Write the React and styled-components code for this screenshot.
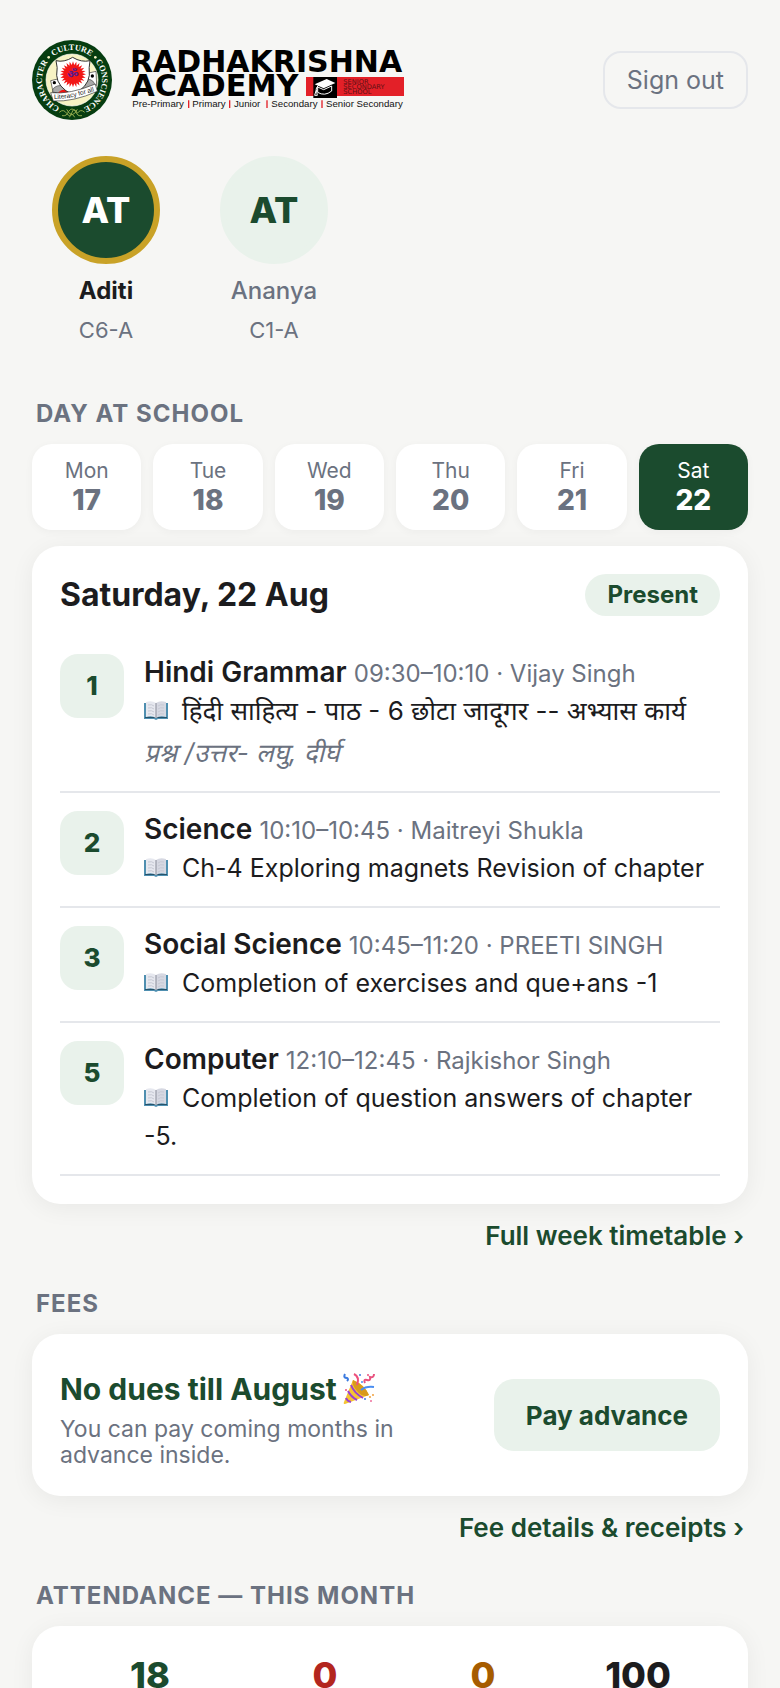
import React, { useState } from "react";
import styled, { createGlobalStyle } from "styled-components";

const colors = {
    bg: "#f6f6f4",
    card: "#ffffff",
    ink: "#1c1c1e",
    muted: "#6b7280",
    line: "#e5e7eb",
    green: "#1b4b2e",
    mint: "#e9f2eb",
    gold: "#c9a227",
    red: "#b3261e",
    amber: "#a65c00",
}

const GlobalStyle = createGlobalStyle`
*, *::before, *::after {
box-sizing: border-box;
}
html {
scrollbar-width: none;
}
body {
margin: 0;
background: ${colors.bg};
color: ${colors.ink};
font-family: Inter, "Noto Sans Devanagari", "Noto Sans", sans-serif;
}
button {
font-family: inherit;
cursor: pointer;
}
h1, h2, h3, p {
margin: 0;
}
`
const Page = styled.main`
padding: 40px 32px;
`
const Header = styled.header`
display: flex;
justify-content: space-between;
align-items: center;
margin-bottom: 36px;
`
const Logo = styled.svg`
display: block;
width: 372px;
height: 80px;
`
const SignOut = styled.button`
height: 58px;
padding: 0 22px;
border: 2px solid ${colors.line};
border-radius: 18px;
background: transparent;
color: ${colors.muted};
font-size: 25px;
line-height: 32px;
`
const Kids = styled.div`
display: flex;
gap: 20px;
margin-bottom: 58px;
`
const Kid = styled.button`
display: flex;
flex-direction: column;
align-items: center;
gap: 10px;
width: 148px;
padding: 0;
border: 0;
background: none;
`
const Avatar = styled.span`
display: flex;
justify-content: center;
align-items: center;
width: 108px;
height: 108px;
border: 6px solid ${({ $active }) => ($active ? colors.gold : colors.mint)};
border-radius: 50%;
background: ${({ $active }) => ($active ? colors.green : colors.mint)};
color: ${({ $active }) => ($active ? "#ffffff" : colors.green)};
font-size: 36px;
font-weight: 800;
`
const KidName = styled.span`
color: ${({ $active }) => ($active ? colors.ink : colors.muted)};
font-size: 24px;
font-weight: ${({ $active }) => ($active ? 700 : 500)};
line-height: 34px;
`
const KidClass = styled.span`
color: ${colors.muted};
font-size: 22px;
line-height: 24px;
`
const SectionTitle = styled.h2`
margin: 38px 4px 16px;
color: ${colors.muted};
font-size: 24px;
font-weight: 700;
line-height: 28px;
letter-spacing: 1px;
text-transform: uppercase;
`
const Days = styled.div`
display: grid;
grid-template-columns: repeat(6, 1fr);
gap: 12px;
margin-bottom: 16px;
`
const Day = styled.button`
display: flex;
flex-direction: column;
align-items: center;
padding: 14px 0;
border: 0;
border-radius: 20px;
background: ${({ $active }) => ($active ? colors.green : colors.card)};
color: ${({ $active }) => ($active ? "#ffffff" : colors.muted)};
box-shadow: 0 2px 8px rgba(0, 0, 0, 0.04);
`
const DayName = styled.span`
font-size: 21px;
line-height: 26px;
`
const DayNumber = styled.span`
font-size: 28px;
font-weight: 800;
line-height: 32px;
`
const Card = styled.section`
padding: 28px;
border-radius: 28px;
background: ${colors.card};
box-shadow: 0 4px 24px rgba(0, 0, 0, 0.06);
`
const CardHead = styled.div`
display: flex;
justify-content: space-between;
align-items: center;
margin-bottom: 20px;
`
const CardTitle = styled.h3`
font-size: 32px;
font-weight: 700;
line-height: 42px;
`
const Badge = styled.span`
padding: 0 22px;
border-radius: 21px;
background: ${colors.mint};
color: ${colors.green};
font-size: 24px;
font-weight: 700;
line-height: 42px;
`
const Period = styled.div`
display: flex;
align-items: flex-start;
gap: 20px;
padding: 18px 0 19px;
border-bottom: 2px solid ${colors.line};
`
const PeriodNumber = styled.div`
flex: none;
width: 64px;
border-radius: 18px;
background: ${colors.mint};
color: ${colors.green};
font-size: 26px;
font-weight: 800;
line-height: 64px;
text-align: center;
`
const PeriodBody = styled.div`
flex: 1;
min-width: 0;
`
const Subject = styled.h3`
font-size: 28px;
font-weight: 600;
line-height: 36px;
`
const Meta = styled.span`
color: ${colors.muted};
font-size: 24px;
font-weight: 400;
line-height: 24px;
`
const Note = styled.p`
margin-top: 2px;
font-size: 25px;
line-height: 38px;
&:lang(hi) {
font-size: 26px;
}
`
const Homework = styled.p`
margin-top: 4px;
color: ${colors.muted};
font-size: 26px;
font-style: italic;
line-height: 38px;
`
const Book = styled.svg`
width: 24px;
height: 20px;
margin-right: 14px;
`
const MoreLink = styled.a`
display: block;
margin: 16px 4px 0;
color: ${colors.green};
font-size: 26px;
font-weight: 600;
line-height: 32px;
text-align: right;
text-decoration: none;
`
const Fees = styled(Card)`
display: flex;
justify-content: space-between;
align-items: center;
gap: 32px;
`
const FeesText = styled.div`
max-width: 360px;
`
const FeesTitle = styled.h3`
color: ${colors.green};
font-size: 30px;
font-weight: 700;
line-height: 54px;
white-space: nowrap;
`
const FeesInfo = styled.p`
color: ${colors.muted};
font-size: 23px;
line-height: 26px;
`
const Party = styled.svg`
width: 32px;
height: 32px;
margin-left: 6px;
vertical-align: -5px;
`
const PayButton = styled.button`
flex: none;
height: 72px;
padding: 0 32px;
border: 0;
border-radius: 20px;
background: ${colors.mint};
color: ${colors.green};
font-size: 26px;
font-weight: 700;
`
const Stats = styled(Card)`
display: grid;
grid-template-columns: 180fr 170fr 146fr 164fr;
`
const Stat = styled.div`
color: ${({ $color }) => $color};
font-size: 36px;
font-weight: 800;
line-height: 42px;
text-align: center;
`

const kids = [
    { initials: "AT", name: "Aditi", grade: "C6-A" },
    { initials: "AT", name: "Ananya", grade: "C1-A" },
]
const days = [
    ["Mon", 17],
    ["Tue", 18],
    ["Wed", 19],
    ["Thu", 20],
    ["Fri", 21],
    ["Sat", 22],
]
const periods = [
    {
        no: 1,
        lang: "hi",
        subject: "Hindi Grammar",
        meta: "09:30–10:10 · Vijay Singh",
        note: "हिंदी साहित्य - पाठ - 6 छोटा जादूगर -- अभ्यास कार्य",
        homework: "प्रश्न /उत्तर- लघु, दीर्घ",
    },
    { no: 2, subject: "Science", meta: "10:10–10:45 · Maitreyi Shukla", note: "Ch-4 Exploring magnets Revision of chapter" },
    { no: 3, subject: "Social Science", meta: "10:45–11:20 · PREETI SINGH", note: "Completion of exercises and que+ans -1" },
    { no: 5, subject: "Computer", meta: "12:10–12:45 · Rajkishor Singh", note: "Completion of question answers of chapter -5." },
]
const stats = [
    [18, colors.green],
    [0, colors.red],
    [0, colors.amber],
    [100, colors.ink],
]

// spikes around the om sign
const sunPoints = () => {
    let points = []
    for (let i = 0; i < 48; i++) {
        const r = i % 2 === 0 ? 39 : 28
        const a = (i * Math.PI) / 24
        points.push(`${(159 + r * Math.sin(a)).toFixed(1)},${(133 - r * Math.cos(a)).toFixed(1)}`)
    }
    return points.join(" ")
}

function SchoolLogo() {
    return (
        <Logo viewBox="36 30 1116 240" role="img" aria-label="Radhakrishna Academy">
            <defs>
                <path id="ring" d="M156 240 A90 90 0 0 1 156 60 A90 90 0 0 1 156 240" />
                <path id="ribbon" d="M102 207 Q156 208 240 178" />
            </defs>
            <circle cx="156" cy="150" r="120" fill="#063d10" />
            <circle cx="156" cy="150" r="78" fill="#f7f3c4" stroke="#fff" strokeWidth="2" />
            <g fill="#fff" fontFamily="Liberation Serif, serif" fontWeight="700" fontSize="25" textAnchor="middle">
                <text><textPath href="#ring" startOffset="21%">CHARACTER</textPath></text>
                <text><textPath href="#ring" startOffset="50%">CULTURE</textPath></text>
                <text><textPath href="#ring" startOffset="79%">CONSCIENCE</textPath></text>
            </g>
            <g fill="#f7f3c4">
                <circle cx="86" cy="82" r="4" />
                <circle cx="226" cy="82" r="4" />
            </g>
            <g fill="none" stroke="#8fa84c" strokeWidth="3">
                <path d="M118 247 Q130 235 140 250 T156 247 T172 250 Q182 235 194 247" />
                <path d="M126 257 Q140 260 146 244 Q156 230 166 244 Q172 260 186 257" />
                <path d="M140 238 Q156 270 172 238 M148 262 Q156 245 164 262" />
            </g>
            <path d="M92 152 L118 146 L128 180 L100 190 Z" fill="#fff" stroke="#333" strokeWidth="2" />
            <path d="M202 130 L228 124 L230 166 L206 174 Z" fill="#fff" stroke="#333" strokeWidth="2" />
            <circle cx="103" cy="158" r="5" />
            <circle cx="217" cy="138" r="5" />
            <path d="M98 186 Q96 168 124 166 L150 196 Z" fill="#aaa" stroke="#444" strokeWidth="2" />
            <path d="M178 190 L200 148 Q222 146 226 170 Z" fill="#aaa" stroke="#444" strokeWidth="2" />
            <path d="M112 192 Q126 172 146 184 L148 196 Z" fill="#e11" />
            <path d="M108 92 Q132 98 158 82 Q184 98 210 92 Q206 112 208 136 Q204 172 158 194 Q112 172 110 136 Q114 112 108 92 Z" fill="#fff" stroke="#333" strokeWidth="3" />
            <polygon points={sunPoints()} fill="#f21616" />
            <text x="159" y="145" fontFamily="Noto Sans Devanagari, Noto Sans, sans-serif" fontSize="34" fontWeight="700" fill="#5a1a8c" textAnchor="middle">ॐ</text>
            <path d="M92 188 Q150 194 226 162 L232 184 Q160 216 100 213 Z" fill="#fff" stroke="#333" strokeWidth="2" />
            <text fontFamily="Liberation Sans, sans-serif" fontSize="20" fill="#222">
                <textPath href="#ribbon">Literacy for all</textPath>
            </text>
            <g fontFamily="DejaVu Sans, sans-serif" fontWeight="700" fill="#000">
                <text x="330" y="126" fontSize="90">RADHAKRISHNA</text>
                <text x="334" y="198" fontSize="91">ACADEMY</text>
            </g>
            <rect x="858" y="141" width="294" height="57" fill="#e32028" />
            <rect x="880" y="141" width="71" height="63" fill="#000" />
            <path d="M884 163 L920 147 L946 159 L911 175 Z" fill="#fff" />
            <path d="M893 171 L893 187 Q914 200 935 183 L935 168 L911 179 Z" fill="none" stroke="#fff" strokeWidth="3" />
            <path d="M911 161 Q888 164 888 182 L884 196 L892 196 L889 180" fill="none" stroke="#fff" strokeWidth="3" />
            <g fontFamily="DejaVu Sans, sans-serif" fontSize="20" fill="#5c1014">
                <text x="970" y="161">SENIOR</text>
                <text x="970" y="176">SECONDARY</text>
                <text x="970" y="191">SCHOOL</text>
            </g>
            <g fontFamily="Liberation Sans, sans-serif" fontSize="29" fill="#111">
                <text x="337" y="232">Pre-Primary</text>
                <text x="517" y="232">Primary</text>
                <text x="642" y="232">Junior</text>
                <text x="754" y="232">Secondary</text>
                <text x="918" y="232">Senior Secondary</text>
            </g>
            <path d="M506 211 V234 M629 211 V234 M741 211 V234 M906 211 V234" stroke="#e32028" strokeWidth="4" />
        </Logo>
    );
}

function BookIcon() {
    return (
        <Book viewBox="0 0 24 20" aria-hidden="true">
            <path d="M0 3 H24 V19 H14 L12 20 L10 19 H0 Z" fill="#4f8fb0" />
            <path d="M1 17 H11 L12 18 L13 17 H23 V18 H1 Z" fill="#27536b" />
            <path d="M2 2 Q8 0 12 3 V18 Q8 15 2 17 Z" fill="#e6e8ef" />
            <path d="M22 2 Q16 0 12 3 V18 Q16 15 22 17 Z" fill="#d6d8e2" />
            <path d="M4 5 Q8 4 10 6 M4 8 Q8 7 10 9 M4 11 Q8 10 10 12 M4 14 Q8 13 10 15 M20 5 Q16 4 14 6 M20 8 Q16 7 14 9 M20 11 Q16 10 14 12 M20 14 Q16 13 14 15" fill="none" stroke="#c6c9d4" strokeWidth="1" />
            <path d="M12 3 V18" stroke="#8a8d99" strokeWidth="1" />
        </Book>
    );
}

function PartyIcon() {
    return (
        <Party viewBox="0 0 32 32" aria-hidden="true">
            <path d="M10 7 Q22 12 26 22 L2 31 Q0 31 1 29 Z" fill="#f5c433" />
            <path d="M10 7 Q22 12 26 22 Q20 25 14 18 Q8 11 10 7 Z" fill="#d99a1c" />
            <path d="M8 12 Q11 20 20 25 M5 18 Q8 24 14 27 M3 25 Q4 28 8 29" fill="none" stroke="#9b3fd1" strokeWidth="2" />
            <path d="M11 1 Q17 4 14 12" fill="none" stroke="#ee4f7c" strokeWidth="2" />
            <path d="M18 17 Q23 13 31 14" fill="none" stroke="#4a8df0" strokeWidth="2" />
            <path d="M2 1 Q0 5 4 5 Q6 6 4 8" fill="none" stroke="#3c7be0" strokeWidth="2" />
            <path d="M22 10 Q20 6 24 7 Q28 8 27 4 Q31 5 31 1" fill="none" stroke="#e8527f" strokeWidth="2" />
            <circle cx="17" cy="2" r="1" fill="#3c7be0" />
            <circle cx="25" cy="2" r="1" fill="#ee4f7c" />
            <circle cx="3" cy="17" r="1" fill="#ee4f7c" />
            <circle cx="19" cy="9" r="1" fill="#4a8df0" />
            <circle cx="30" cy="22" r="1" fill="#f0a03c" />
            <circle cx="22" cy="26" r="1" fill="#3c7be0" />
            <circle cx="28" cy="28" r="1" fill="#ee6f9c" />
            <circle cx="27" cy="24" r="1" fill="#f0a03c" />
        </Party>
    );
}

function App() {
    const [kid, setKid] = useState(0)
    const [day, setDay] = useState(22)
    return (
        <>
            <GlobalStyle />
            <Page>
                <Header>
                    <SchoolLogo />
                    <SignOut>Sign out</SignOut>
                </Header>
                <Kids>
                    {
                        kids.map((e, i) => (
                            <Kid key={i} onClick={() => setKid(i)}>
                                <Avatar $active={kid === i}>{e.initials}</Avatar>
                                <KidName $active={kid === i}>{e.name}</KidName>
                                <KidClass>{e.grade}</KidClass>
                            </Kid>
                        ))
                    }
                </Kids>

                <SectionTitle>Day at school</SectionTitle>
                <Days>
                    {
                        days.map(([name, num]) => (
                            <Day key={num} $active={day === num} onClick={() => setDay(num)}>
                                <DayName>{name}</DayName>
                                <DayNumber>{num}</DayNumber>
                            </Day>
                        ))
                    }
                </Days>
                <Card>
                    <CardHead>
                        <CardTitle>Saturday, 22 Aug</CardTitle>
                        <Badge>Present</Badge>
                    </CardHead>
                    {
                        periods.map((e) => (
                            <Period key={e.no}>
                                <PeriodNumber>{e.no}</PeriodNumber>
                                <PeriodBody>
                                    <Subject>{e.subject} <Meta>{e.meta}</Meta></Subject>
                                    <Note lang={e.lang}><BookIcon />{e.note}</Note>
                                    {e.homework ? <Homework lang={e.lang}>{e.homework}</Homework> : null}
                                </PeriodBody>
                            </Period>
                        ))
                    }
                </Card>
                <MoreLink href="#timetable">Full week timetable ›</MoreLink>

                <SectionTitle>Fees</SectionTitle>
                <Fees>
                    <FeesText>
                        <FeesTitle>No dues till August<PartyIcon /></FeesTitle>
                        <FeesInfo>You can pay coming months in advance inside.</FeesInfo>
                    </FeesText>
                    <PayButton>Pay advance</PayButton>
                </Fees>
                <MoreLink href="#fees">Fee details & receipts ›</MoreLink>

                <SectionTitle>Attendance — this month</SectionTitle>
                <Stats>
                    {
                        stats.map(([value, color], i) => (
                            <Stat key={i} $color={color}>{value}</Stat>
                        ))
                    }
                </Stats>
            </Page>
        </>
    );
}

export default App;
